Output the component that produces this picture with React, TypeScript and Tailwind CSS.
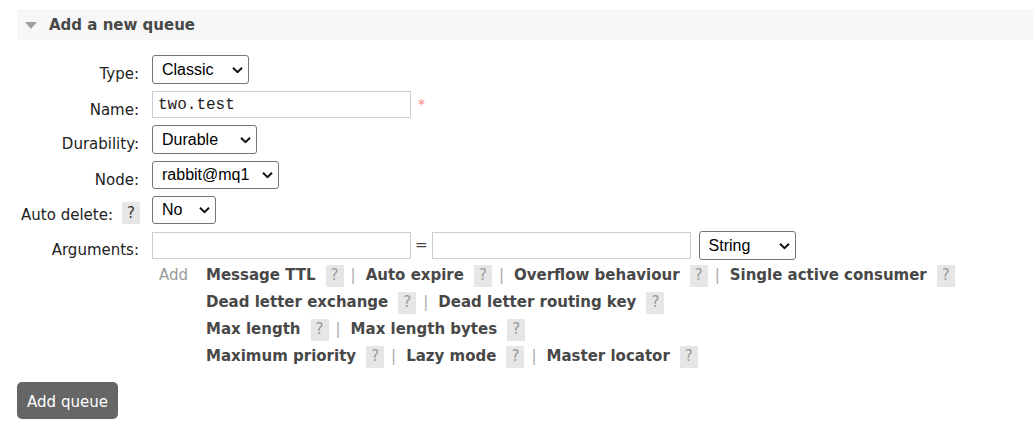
import type { ReactNode } from "react";

const VERDANA = "font-['DejaVu_Sans',Verdana,sans-serif]";
const ARIAL = "font-['Liberation_Sans',Arial,sans-serif]";

function Chevron() {
  return (
    <svg
      className="pointer-events-none absolute right-[6px] top-1/2 -translate-y-1/2"
      width="11"
      height="7"
      viewBox="0 0 11 7"
      fill="none"
    >
      <path d="M1 1.2 5.5 5.6 10 1.2" stroke="#111" strokeWidth="2" />
    </svg>
  );
}

function Select({
  value,
  options,
  width,
  height = 29,
}: {
  value: string;
  options: string[];
  width: string;
  height?: number;
}) {
  return (
    <div className={`relative ${width}`}>
      <select
        defaultValue={value}
        style={{ height }}
        className={`${ARIAL} w-full appearance-none rounded-[3px] border border-[#767676] bg-white pl-[9px] pr-6 text-[16px] text-black outline-none`}
      >
        {options.map((o) => (
          <option key={o}>{o}</option>
        ))}
      </select>
      <Chevron />
    </div>
  );
}

function TextInput({ value = "" }: { value?: string }) {
  return (
    <input
      type="text"
      defaultValue={value}
      className="h-[27px] w-[259px] border border-[#cccccc] bg-white px-[5px] font-['Liberation_Mono','Courier_New',monospace] text-[16px] text-[#222] outline-none"
    />
  );
}

function Help({ dark = false }: { dark?: boolean }) {
  return (
    <span
      className={`inline-flex h-[22px] w-[18px] items-center justify-center bg-[#e6e6e6] text-[15px] font-normal ${
        dark ? "text-[#333]" : "text-[#999]"
      }`}
    >
      ?
    </span>
  );
}

function Arg({ name }: { name: string }) {
  return (
    <span className="flex items-center">
      <span className="font-bold text-[#484848]">{name}</span>
      <span className="ml-[10px]">
        <Help />
      </span>
    </span>
  );
}

function Sep() {
  return <span className="ml-[7px] mr-[10px] text-[#aaa]">|</span>;
}

function Row({ label, children }: { label: ReactNode; children: ReactNode }) {
  return (
    <>
      <div className="flex items-start justify-end pt-[11px] text-right leading-[16px] text-[#222]">
        {label}
      </div>
      <div className="flex items-center">{children}</div>
    </>
  );
}

function ArgLine({ names }: { names: string[] }) {
  return (
    <div className="flex h-[27px] items-center">
      {names.map((n, i) => (
        <span key={n} className="flex items-center">
          {i > 0 ? <Sep /> : null}
          <Arg name={n} />
        </span>
      ))}
    </div>
  );
}

export default function App() {
  return (
    <div className={`${VERDANA} min-h-[439px] bg-white pt-[9px] text-[15px]`}>
      <div className="ml-[17px] flex h-[31px] items-center bg-[#f7f7f7]">
        <svg className="ml-[8px] mt-[1px]" width="12" height="7" viewBox="0 0 12 7">
          <path d="M0 0h12L6 7z" fill="#a0a0a0" />
        </svg>
        <h2 className="ml-[12px] mt-[2px] text-[15px] font-bold text-[#484848]">
          Add a new queue
        </h2>
      </div>

      <div className="mt-[15px] grid grid-cols-[139px_1fr] gap-x-[13px] gap-y-[7px]">
        <Row label="Type:">
          <Select value="Classic" options={["Classic", "Quorum", "Stream"]} width="w-[97px]" />
        </Row>
        <Row label="Name:">
          <TextInput value="two.test" />
          <span className="ml-[7px] self-start pt-[3px] text-[14px] text-[#ff8080]">*</span>
        </Row>
        <Row label="Durability:">
          <Select value="Durable" options={["Durable", "Transient"]} width="w-[105px]" />
        </Row>
        <Row label="Node:">
          <Select value="rabbit@mq1" options={["rabbit@mq1"]} width="w-[127px]" height={28} />
        </Row>
        <Row
          label={
            <span className="flex items-start">
              <span>Auto delete:</span>
              <span className="ml-[9px] -mt-[5px] -mr-[1px]">
                <Help dark />
              </span>
            </span>
          }
        >
          <Select value="No" options={["No", "Yes"]} width="w-[64px]" height={28} />
        </Row>
        <Row label="Arguments:">
          <TextInput />
          <span className="mx-[4px] text-[#444]">=</span>
          <TextInput />
          <div className="ml-[8px]">
            <Select value="String" options={["String", "Number", "Boolean", "List"]} width="w-[97px]" />
          </div>
        </Row>
        <div />
        <div className="-mt-[5px] flex">
          <div className="w-[54px] pl-[7px] pt-[2px] text-[#999]">Add</div>
          <div className="flex flex-col">
            <ArgLine
              names={[
                "Message TTL",
                "Auto expire",
                "Overflow behaviour",
                "Single active consumer",
              ]}
            />
            <ArgLine names={["Dead letter exchange", "Dead letter routing key"]} />
            <ArgLine names={["Max length", "Max length bytes"]} />
            <ArgLine names={["Maximum priority", "Lazy mode", "Master locator"]} />
          </div>
        </div>
      </div>

      <button
        type="button"
        className="ml-[17px] mt-[12px] h-[37px] w-[101px] rounded-[5px] bg-[#666] pt-[3px] text-[15px] text-white"
      >
        Add queue
      </button>
    </div>
  );
}
